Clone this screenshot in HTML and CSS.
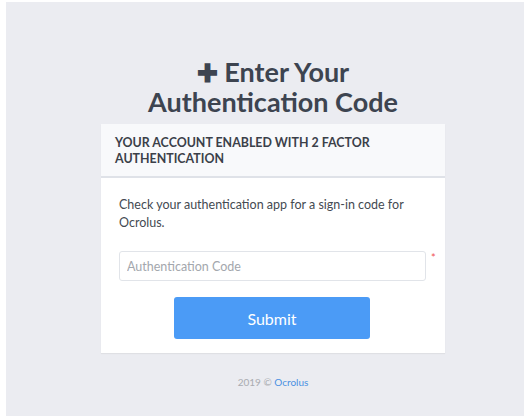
FILE: index.html
```html
<!DOCTYPE html>
<html>
<head>
<meta charset="utf-8">
<link rel="stylesheet" href="styles.css">
</head>
<body>
<div class="page">
  <div class="wrap">
    <h1 class="title"><span class="plus">&#10010;</span> Enter Your<br>Authentication Code</h1>
    <div class="card">
      <div class="card-head">YOUR ACCOUNT ENABLED WITH 2 FACTOR AUTHENTICATION</div>
      <div class="card-body">
        <p class="msg">Check your authentication app for a sign-in code for Ocrolus.</p>
        <div class="field">
          <input class="input" type="text" placeholder="Authentication Code">
          <span class="req">*</span>
        </div>
        <div class="actions"><button class="btn">Submit</button></div>
      </div>
    </div>
    <div class="footer">2019 © <a class="link" href="#">Ocrolus</a></div>
  </div>
</div>
</body>
</html>
```
FILE: styles.css
```css
html, body { margin: 0; padding: 0; background: #fff; }
body { font-family: Lato, "Open Sans", sans-serif; }
.page {
  margin: 2px 0 0 6px;
  height: 414px;
  background: #ebecf1;
  overflow: hidden;
}
.wrap {
  width: 344px;
  margin-left: 95px;
  padding-top: 55px;
}
.title {
  margin: 0 0 8px;
  text-align: center;
  font-size: 27px;
  line-height: 29px;
  font-weight: 700;
  color: #3d4450;
}
.plus { font-size: 25px; }
.card { background: #fff; box-shadow: 0 1px 1px rgba(0,0,0,0.05); }
.card-head {
  background: #f8f9fb;
  padding: 11px 14px 9px;
  font-size: 12.4px;
  line-height: 16px;
  font-weight: 700;
  color: #3b4049;
  border-bottom: 2px solid #dfe2e8;
}
.card-body { padding: 18px 14px 14px 18px; }
.msg {
  margin: 0 0 19px;
  font-size: 12.5px;
  line-height: 18px;
  color: #444a52;
}
.field { display: flex; align-items: flex-start; }
.input {
  flex-shrink: 0;
  width: 307px;
  height: 30px;
  box-sizing: border-box;
  border: 1px solid #e1e4e9;
  border-radius: 3px;
  padding: 0 7px;
  font-family: Lato, sans-serif;
  font-size: 12.5px;
  color: #333;
  outline: none;
}
.input::placeholder { color: #a3a7ad; }
.req { color: #f05252; font-size: 11px; margin-left: 5px; line-height: 14px; }
.actions { display: flex; margin-top: 16px; padding-left: 55px; }
.btn {
  width: 196px;
  height: 42px;
  border: none;
  border-radius: 3px;
  background: #4b9bf6;
  color: #fff;
  font-family: Lato, sans-serif;
  font-size: 16px;
}
.footer {
  margin-top: 23px;
  text-align: center;
  font-size: 10px;
  color: #a9abb0;
}
.link { color: #4a90e2; text-decoration: none; }
```
